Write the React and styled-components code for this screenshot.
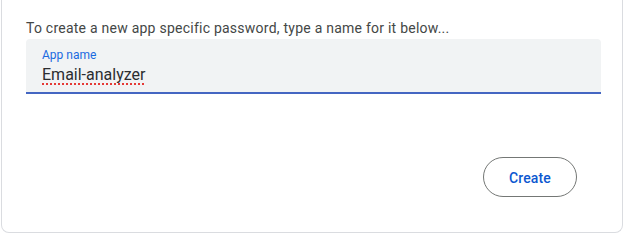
import React from "react";
import styled, { createGlobalStyle } from "styled-components";

const Global = createGlobalStyle`
  html, body { margin: 0; padding: 0; background: #ffffff; }
  body { font-family: Roboto, "Liberation Sans", Arial, sans-serif; }
`;

const Page = styled.div`
  width: 625px;
  height: 234px;
  padding: 0 2px 1px 1px;
  box-sizing: border-box;
`;

const Card = styled.div`
  box-sizing: border-box;
  height: 100%;
  border: 1px solid #dadce0;
  border-top: none;
  border-radius: 0 0 8px 8px;
  padding: 18px 21px 0 24px;
  display: flex;
  flex-direction: column;
`;

const Intro = styled.p`
  margin: 0 0 1px;
  font-size: 14px;
  line-height: 20px;
  color: #444746;
  letter-spacing: 0.24px;
`;

const Field = styled.div`
  background: #f1f3f4;
  border-radius: 4px 4px 0 0;
  border-bottom: 2px solid #4466c2;
  padding: 8px 16px 5px;
  display: flex;
  flex-direction: column;
`;

const Label = styled.span`
  font-size: 12px;
  line-height: 16px;
  color: #1a6ae0;
`;

const Value = styled.span`
  font-size: 16px;
  line-height: 24px;
  color: #2b2d30;
  text-decoration-line: underline;
  text-decoration-style: dotted;
  text-decoration-color: #e53935;
  text-decoration-thickness: 1.5px;
  text-underline-offset: 3px;
  align-self: flex-start;
`;

const Actions = styled.div`
  display: flex;
  justify-content: flex-end;
  padding: 63px 24px 0 0;
`;

const Button = styled.button`
  box-sizing: border-box;
  width: 94px;
  height: 40px;
  border: 1px solid #747775;
  border-radius: 20px;
  background: #ffffff;
  color: #0b57d0;
  font-family: Roboto, "Liberation Sans", Arial, sans-serif;
  font-size: 14px;
  font-weight: 500;
  letter-spacing: 0.1px;
  padding: 1px 0 0;
  cursor: pointer;
`;

export default function App() {
  return (
    <>
      <Global />
      <Page>
        <Card>
          <Intro>To create a new app specific password, type a name for it below...</Intro>
          <Field>
            <Label>App name</Label>
            <Value>Email-analyzer</Value>
          </Field>
          <Actions>
            <Button>Create</Button>
          </Actions>
        </Card>
      </Page>
    </>
  );
}
